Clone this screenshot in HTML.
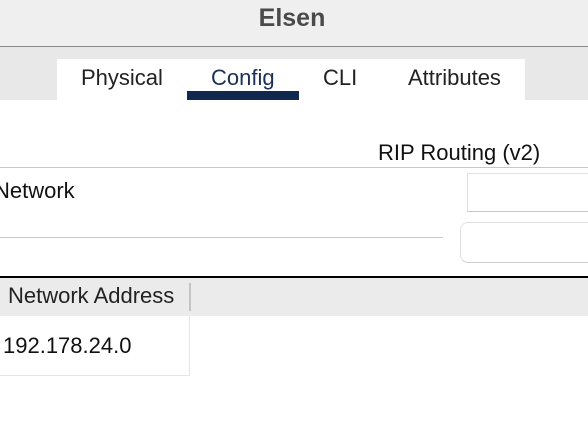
<!DOCTYPE html>
<html><head><meta charset="utf-8"><style>
body{margin:0;width:588px;height:426px;overflow:hidden;background:#fff;font-family:"Liberation Sans",Arial,sans-serif;position:relative}
div{position:absolute;box-sizing:border-box}
.t{white-space:nowrap;font-size:22px;color:#111}
</style></head><body>
<div style="left:0;top:0;width:588px;height:47px;background:#efefef;border-bottom:1px solid #8a8a8a"></div>
<div class="t" style="left:0;width:584px;top:4px;text-align:center;font-size:25px;font-weight:bold;color:#4a4a4a">Elsen</div>
<div style="left:0;top:47px;width:588px;height:53px;background:#e8e8e8"></div>
<div style="left:57px;top:59px;width:468px;height:41px;background:#fff"></div>
<div class="t" style="left:81px;top:65px;color:#222">Physical</div>
<div class="t" style="left:211px;top:65px;color:#1b3055">Config</div>
<div class="t" style="left:323px;top:65px;color:#222">CLI</div>
<div class="t" style="left:408px;top:65px;color:#222">Attributes</div>
<div style="left:187px;top:91px;width:112px;height:9px;background:#10284d"></div>
<div class="t" style="left:378px;top:140px">RIP Routing (v2)</div>
<div style="left:0;top:167px;width:588px;height:1px;background:#c8c8c8"></div>
<div class="t" style="left:-6px;top:178px">Network</div>
<div style="left:467px;top:173px;width:130px;height:39px;border:1px solid #e2e2e2;border-bottom-color:#c8c8c8"></div>
<div style="left:0;top:237px;width:443px;height:1px;background:#c8c8c8"></div>
<div style="left:460px;top:222px;width:140px;height:41px;border:1px solid #e0e0e0;border-bottom-color:#cfcfcf;border-radius:8px"></div>
<div style="left:0;top:276px;width:588px;height:2px;background:#000"></div>
<div style="left:0;top:278px;width:588px;height:38px;background:#ebebeb"></div>
<div class="t" style="left:8px;top:283px;color:#222">Network Address</div>
<div style="left:189px;top:283px;width:2px;height:28px;background:#c4c4c4"></div>
<div style="left:-1px;top:316px;width:191px;height:60px;border-right:1px solid #e6e6e6;border-bottom:1px solid #e6e6e6"></div>
<div class="t" style="left:3px;top:333px">192.178.24.0</div>
</body></html>
